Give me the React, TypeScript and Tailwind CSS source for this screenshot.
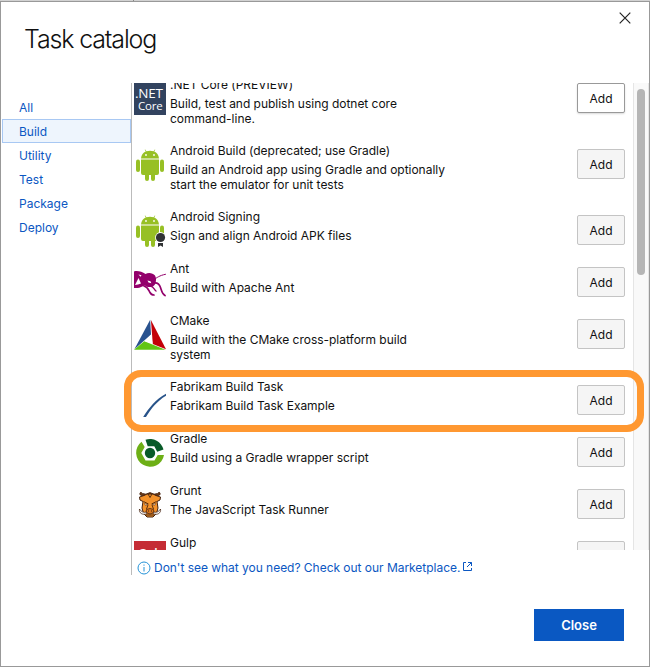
import React from "react";

const categories = ["All", "Build", "Utility", "Test", "Package", "Deploy"];

function DotNetIcon() {
  return (
    <div className="flex h-8 w-8 flex-col overflow-hidden bg-[#32435f] pt-[3px] font-['Open_Sans',sans-serif] text-white">
      <span className="pl-[1px] text-[13.5px] leading-[15px] tracking-[-0.2px]">.NET</span>
      <span className="pl-[4px] text-[11.5px] leading-[9px] tracking-[-0.2px]">Core</span>
    </div>
  );
}

function AndroidIcon({ signing = false }: { signing?: boolean }) {
  return (
    <svg className="block h-8 w-8" viewBox="0 0 32 32">
      <g fill="#97c024">
        <path d="M7 9.4C7.3 6 9.2 3.8 11.8 2.6L10.7.8l.5-.3 1.2 1.8a11 11 0 0 1 7.2 0L20.8.5l.5.3-1.1 1.8C22.8 3.8 24.7 6 25 9.4z" />
        <path d="M7 10.6h18V24a2 2 0 0 1-2 2h-2v4a2 2 0 0 1-4 0v-4h-2v4a2 2 0 0 1-4 0v-4H9a2 2 0 0 1-2-2z" />
        <rect x="2" y="10.6" width="4" height="12.4" rx="2" />
        <rect x="26" y="10.6" width="4" height="12.4" rx="2" />
      </g>
      <circle cx="12" cy="6" r=".9" fill="#fff" />
      <circle cx="20" cy="6" r=".9" fill="#fff" />
      {signing && (
        <g>
          <path d="M23 25h8v8h-8z" fill="#fff" />
          <circle cx="26.5" cy="22.5" r="5.4" fill="#fff" />
          <circle cx="26.5" cy="22.5" r="4.6" fill="#303234" />
          <path d="M24 28h5v4l-2.5-1.6L24 32z" fill="#303234" />
        </g>
      )}
    </svg>
  );
}

function AntIcon() {
  return (
    <svg className="block h-8 w-8" viewBox="0 0 32 32">
      <path
        d="M0 4.5C3 3.500 8 4.500 11.500 7c3-2 7.500-1 9.500 1.500 1.500 2.500 1.200 6 .2 8.500-1 2-3.200 3.200-5.700 3-2 0-3.500-.5-4.500-1.500-3 .8-5 2.500-7.500 2.500L0 21z"
        fill="#93006b"
      />
      <g fill="none" stroke="#93006b" strokeLinecap="round">
        <path d="M20.500 12c2.500-1 4.500-3.500 11-4.700" strokeWidth="1" />
        <path d="M20 16c3-.5 5.500 1.500 6.500 4.500s1.500 6.500 4.500 8" strokeWidth="1.700" />
        <path d="M10 19c4 1 4.500 4 6 6.500 1 2 2.500 2.500 4 2.500" strokeWidth="1.700" />
        <path d="M16.500 19c3 .5 3.500 3.500 5.500 5" strokeWidth="1.300" />
      </g>
      <path d="M1 18l3.500-7L7 16.500l-3 1zM13.500 13.500l3 .8.8 2-2.800-.8zM4.500 7.500l3 .8-1 1.500z" fill="#fff" />
    </svg>
  );
}

function CMakeIcon() {
  return (
    <svg className="block h-8 w-8" viewBox="0 0 32 32">
      <path d="M16.200 .8L.4 30.200 17 15.500z" fill="#29528f" />
      <path d="M16.900 1L32 30.200 18.800 25z" fill="#c30008" />
      <path d="M0 30.800l10.300-8.600L31.500 30.800z" fill="#61c514" />
      <path d="M16.900 15.700l1.700 9-7.600-2.500z" fill="#fff" />
    </svg>
  );
}

function FabrikamIcon() {
  return (
    <svg className="block h-8 w-8" viewBox="0 0 32 32">
      <path d="M9.2 32C14.500 23.500 21.500 14.500 32 8.800v2C23 16 17 24 12 32z" fill="#285389" />
    </svg>
  );
}

function GradleIcon() {
  return (
    <svg className="block h-8 w-8" viewBox="0 0 32 32">
      <path d="M11.500 2.700A14 14 0 0 1 29.500 12.500l-6.300 2.300L20.300 9.300h-6.600z" fill="#095b29" />
      <path d="M7.500 4.800A14 14 0 1 0 30 18h-6.300l-3.200 5.500h-9L7.300 16 10.700 10z" fill="#6daf16" />
      <circle cx="16" cy="16" r="5.200" fill="#095b29" />
    </svg>
  );
}

function GruntIcon() {
  return (
    <svg className="block h-8 w-8" viewBox="0 0 32 32" strokeLinejoin="round">
      <path
        d="M9 7C5.500 6.500 5 4.500 7 3c.2 1.800 2.500 1.500 5 2.200L16 3.500l4 1.700c2.500-.7 4.800-.4 5-2.200 2 1.500 1.500 3.500-2 4z"
        fill="#6b3a16"
        stroke="#45220f"
        strokeWidth=".8"
      />
      <path
        d="M10 6.500L13 5h6l3 1.500L26.500 8 26 11l-3 1.500 1 6.500-1.500 5.500L19 28h-6l-3.500-3.500L8 19l1-6.500L6 11 5.500 8z"
        fill="#f3922b"
        stroke="#45220f"
        strokeWidth="1"
      />
      <path d="M14 5l2 3.500L18 5M9.500 12.500l5 2.500M22.500 12.500l-5 2.500M14 16l-1.500 4M18 16l1.500 4" fill="none" stroke="#45220f" strokeWidth=".9" />
      <path d="M10.500 14.500l3.300 1-2.500.8zM21.500 14.500l-3.300 1 2.500.8z" fill="#fff" stroke="#45220f" strokeWidth=".5" />
      <path d="M12.500 20.500l3.500-1 3.500 1 .5 3-4 1.500-4-1.500z" fill="#d8751d" stroke="#45220f" strokeWidth=".8" />
      <path d="M14 22h1M17 22h1M11.500 26h9" stroke="#45220f" strokeWidth="1.100" />
      <path d="M5.500 20c-.8 4 3 6.500 7.500 4.700l-.5-1.700c-3 .8-5 0-7-3zM26.500 20c.8 4-3 6.500-7.500 4.700l.5-1.700c3 .8 5 0 7-3z" fill="#fff" stroke="#45220f" strokeWidth=".8" />
    </svg>
  );
}

function GulpIcon() {
  return (
    <div className="h-8 w-8 bg-[#c52c35] pt-[6px] pl-1 font-['Open_Sans',sans-serif] text-[12px] font-semibold leading-[14px] text-white">
      Gulp
    </div>
  );
}

type Task = { title: string; lines: string[]; icon: React.ReactNode };

const tasks: Task[] = [
  { title: ".NET Core (PREVIEW)", lines: ["Build, test and publish using dotnet core", "command-line."], icon: <DotNetIcon /> },
  { title: "Android Build (deprecated; use Gradle)", lines: ["Build an Android app using Gradle and optionally", "start the emulator for unit tests"], icon: <AndroidIcon /> },
  { title: "Android Signing", lines: ["Sign and align Android APK files"], icon: <AndroidIcon signing /> },
  { title: "Ant", lines: ["Build with Apache Ant"], icon: <AntIcon /> },
  { title: "CMake", lines: ["Build with the CMake cross-platform build", "system"], icon: <CMakeIcon /> },
  { title: "Fabrikam Build Task", lines: ["Fabrikam Build Task Example"], icon: <FabrikamIcon /> },
  { title: "Gradle", lines: ["Build using a Gradle wrapper script"], icon: <GradleIcon /> },
  { title: "Grunt", lines: ["The JavaScript Task Runner"], icon: <GruntIcon /> },
  { title: "Gulp", lines: [], icon: <GulpIcon /> },
];

function TaskRow({ task, first }: { task: Task; first: boolean }) {
  return (
    <div className={`flex shrink-0 ${task.lines.length > 1 ? "h-[66px]" : "h-[52px]"}`}>
      <div className="mt-[6px] w-9 shrink-0 pl-[2px]">{task.icon}</div>
      <div className="flex-1 pl-[2px] tracking-[-0.02px]">
        <div className="leading-4 whitespace-nowrap">{task.title}</div>
        <div className="mt-[3px] leading-[15px] whitespace-nowrap">
          {task.lines.map((l) => (
            <div key={l}>{l}</div>
          ))}
        </div>
      </div>
      <button
        className={`mt-[6px] mr-2 h-[30px] w-12 rounded-[2px] border pt-[2px] text-[12px] ${
          first ? "border-[#999] bg-white shadow-[0_1px_2px_rgba(0,0,0,0.15)]" : "border-[#c4c4c4] bg-[#f5f5f5]"
        }`}
      >
        Add
      </button>
    </div>
  );
}

export default function App() {
  return (
    <div className="relative flex h-[667px] w-[650px] flex-col overflow-hidden bg-[#d2d2d2] pt-px font-['Inter','Liberation_Sans',sans-serif] text-[12px] text-[#111]">
      <div className="absolute top-0 left-[133px] h-px w-px bg-[#888]" />
      <div className="flex min-h-0 flex-1 flex-col border border-[#999] bg-white">
        <header className="flex h-[81px] shrink-0 justify-between">
          <h1 className="pt-[21px] pl-[23px] text-[25px] leading-8 font-light tracking-[-1.15px]">Task catalog</h1>
          <svg className="mt-[10px] mr-[18px] h-3 w-3" viewBox="0 0 12 12">
            <path d="M.7.7l10.6 10.6M11.3.7L.7 11.3" stroke="#222" strokeWidth="1.2" />
          </svg>
        </header>
        <main className="flex h-[492px] shrink-0">
          <nav className="w-[130px] shrink-0 pt-3 pl-px text-[12px] text-[#0b57c2]">
            {categories.map((c) => (
              <div key={c} className={`flex h-6 items-center border pt-[2px] pl-4 ${c === "Build" ? "border-[#a8c8f3] bg-[#eef5fd]" : "border-transparent"}`}>
                {c}
              </div>
            ))}
          </nav>
          <section className="flex min-w-0 flex-1 flex-col border-l border-[#bbb]">
            <div className="flex h-[467px] shrink-0 overflow-hidden">
              <div className="-mt-[6px] flex min-w-0 flex-1 flex-col">
                {tasks.map((t, i) => (
                  <TaskRow key={t.title} task={t} first={i === 0} />
                ))}
              </div>
              <div className="w-4 shrink-0 border-x border-[#e5e5e5] bg-[#f9f9f9] pt-[6px] pl-[3px]">
                <div className="h-[186px] w-2 rounded-full bg-[#b5b5b5]" />
              </div>
            </div>
            <a className="flex h-[25px] items-center pt-[10px] pl-[5px] text-[12px] leading-[15px] tracking-[-0.03px] whitespace-nowrap text-[#0b57c2]">
              <svg className="mr-[3px] h-[14px] w-[14px] shrink-0" viewBox="0 0 14 14" fill="none" stroke="#2493d8">
                <circle cx="7" cy="7" r="6" />
                <path d="M7 6v4.5M7 3.5v1.2" />
              </svg>
              Don&apos;t see what you need? Check out our Marketplace.
              <svg className="mb-[2px] ml-[3px] h-[9px] w-[9px] shrink-0" viewBox="0 0 9 9" fill="none" stroke="#0b57c2">
                <path d="M3 .5H.5v8h8V6M5 .5h3.5V4M8.500 .5L4 5" />
              </svg>
            </a>
          </section>
        </main>
        <footer className="flex flex-1 justify-end pt-[34px] pr-[25px]">
          <button className="h-8 w-[90px] bg-[#0a58c2] pt-[2px] text-[13px] font-semibold text-white">Close</button>
        </footer>
      </div>
      <div className="absolute top-[370px] left-[124px] h-[62px] w-[520px] rounded-[17px] border-[7px] border-[#ff9831]" />
    </div>
  );
}
